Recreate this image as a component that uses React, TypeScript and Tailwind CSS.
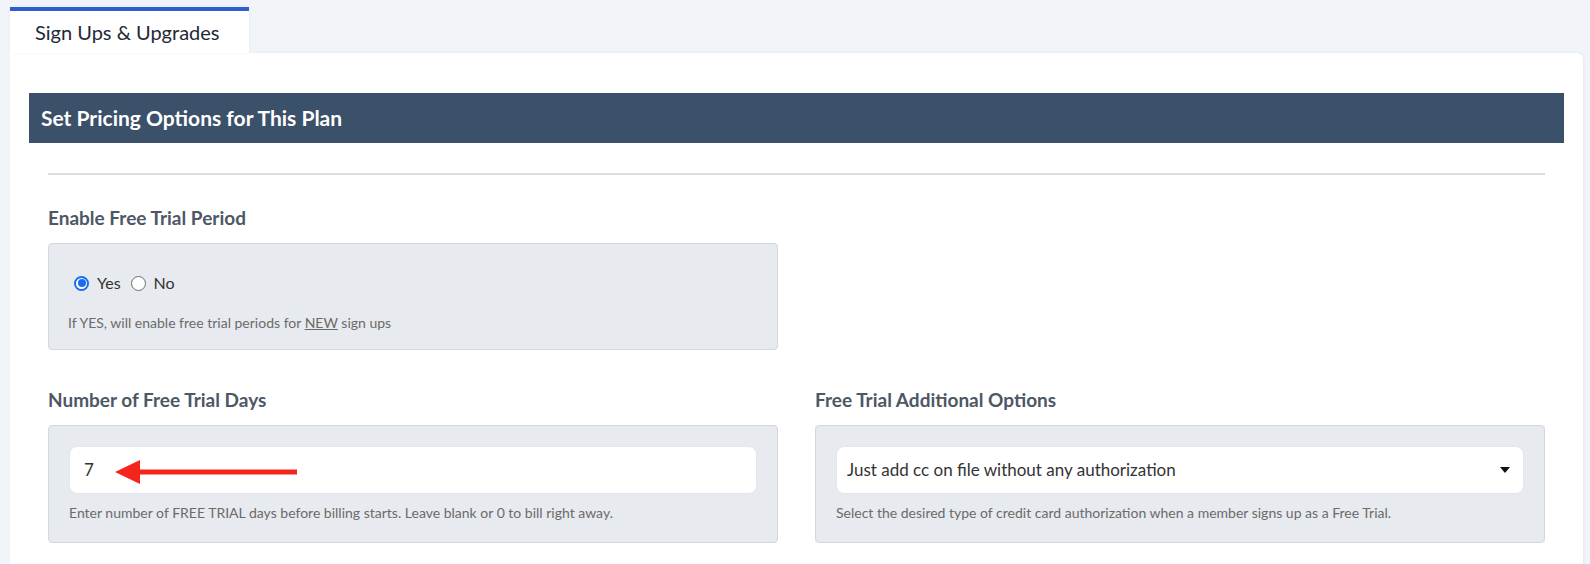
import { useState } from 'react';

const FONT = { fontFamily: 'Lato, "Open Sans", sans-serif' };

function Radio({ checked, label, onClick }: { checked: boolean; label: string; onClick: () => void }) {
  return (
    <label className="flex items-center gap-[8px] cursor-pointer" onClick={onClick}>
      {checked ? (
        <span className="w-[15px] h-[15px] rounded-full border-[2px] border-[#1a6cf0] bg-white flex items-center justify-center">
          <span className="w-[8px] h-[8px] rounded-full bg-[#1a6cf0]" />
        </span>
      ) : (
        <span className="w-[15px] h-[15px] rounded-full border border-[#6b6b6b] bg-white" />
      )}
      <span className="text-[16px] text-[#333]">{label}</span>
    </label>
  );
}

function Field({ title, children }: { title: string; children: React.ReactNode }) {
  return (
    <div>
      <div className="text-[19px] font-bold text-[#4d5766] h-[22px] leading-[22px]">{title}</div>
      <div className="mt-[14px] rounded-[4px] border border-[#d3d8de] bg-[#e7eaee]">{children}</div>
    </div>
  );
}

export default function App() {
  const [trial, setTrial] = useState(true);

  return (
    <div className="min-h-[564px] bg-[#f1f4f8] pl-[10px] pr-[7px] pt-[7px]" style={FONT}>
      {/* tab strip */}
      <div className="flex">
        <div className="w-[239px] h-[46px] bg-white border-t-[4px] border-[#2e5fcf] flex items-center pl-[25px] text-[20px] text-[#1f2937] shadow-[0_0_3px_rgba(0,0,0,0.05)]">
          Sign Ups &amp; Upgrades
        </div>
      </div>

      {/* card */}
      <div className="bg-white rounded-tr-[6px] shadow-[1px_0_3px_rgba(0,0,0,0.06)] px-[19px] pt-[40px] pb-[40px]">
        <div className="h-[50px] bg-[#3b5069] flex items-center pl-[12px] text-white text-[21px] font-bold">
          Set Pricing Options for This Plan
        </div>

        <div className="px-[19px]">
          <div className="mt-[30px] h-[2px] bg-[#dcdcdc]" />

          <div className="mt-[32px] grid grid-cols-2 gap-[37px]">
            <Field title="Enable Free Trial Period">
              <div className="h-[105px] pl-[25px] pt-[27px]">
                <div className="flex items-center gap-[10px]">
                  <Radio checked={trial} label="Yes" onClick={() => setTrial(true)} />
                  <Radio checked={!trial} label="No" onClick={() => setTrial(false)} />
                </div>
                <div className="mt-[17px] -ml-[6px] text-[14px] text-[#6b6b6b]">
                  If YES, will enable free trial periods for <span className="underline">NEW</span> sign ups
                </div>
              </div>
            </Field>
            <div />
          </div>

          <div className="mt-[39px] grid grid-cols-2 gap-[37px]">
            <Field title="Number of Free Trial Days">
              <div className="px-[20px] pt-[20px] pb-[19px]">
                <div className="relative h-[48px] bg-white rounded-[8px] border border-[#e3e6ea] flex items-center pl-[14px] text-[17px] text-[#333]">
                  7
                  {/* annotation arrow */}
                  <svg className="absolute left-[45px] top-[12px]" width="184" height="26" viewBox="0 0 184 26">
                    <polygon points="0,13 25,1 25,25" fill="#f5241c" />
                    <rect x="22" y="10.5" width="160" height="5" fill="#f5241c" />
                  </svg>
                </div>
                <div className="mt-[8px] text-[14px] text-[#6b6b6b]">
                  Enter number of FREE TRIAL days before billing starts. Leave blank or 0 to bill right away.
                </div>
              </div>
            </Field>
            <Field title="Free Trial Additional Options">
              <div className="px-[20px] pt-[20px] pb-[19px]">
                <div className="h-[48px] bg-white rounded-[8px] border border-[#e3e6ea] flex items-center justify-between pl-[10px] pr-[13px] text-[17px] text-[#333]">
                  <span>Just add cc on file without any authorization</span>
                  <svg width="10" height="6" viewBox="0 0 10 6">
                    <polygon points="0,0 10,0 5,6" fill="#111" />
                  </svg>
                </div>
                <div className="mt-[8px] text-[14px] text-[#6b6b6b]">
                  Select the desired type of credit card authorization when a member signs up as a Free Trial.
                </div>
              </div>
            </Field>
          </div>
        </div>
      </div>
    </div>
  );
}
